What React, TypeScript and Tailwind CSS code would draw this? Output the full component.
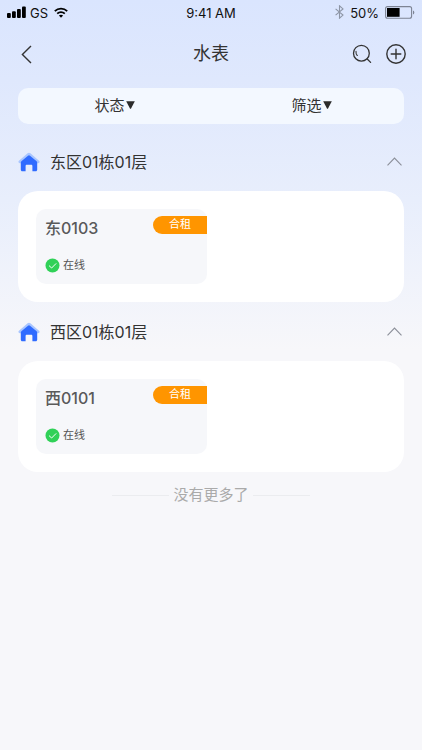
import { useState } from 'react'

type Meter = { name: string; tag: string; status: string }
type Floor = { title: string; meters: Meter[] }

const floors: Floor[] = [
  { title: '东区01栋01层', meters: [{ name: '东0103', tag: '合租', status: '在线' }] },
  { title: '西区01栋01层', meters: [{ name: '西0101', tag: '合租', status: '在线' }] },
]

function StatusBar() {
  return (
    <div className="grid h-6 grid-cols-3 items-center px-[7px] pt-0.5 text-[13px] leading-5 text-[#111]">
      <div className="flex items-center">
        <svg className="mb-0.5" width="19" height="12" viewBox="0 0 19 12" fill="#000">
          <rect x="0" y="7" width="3.8" height="5" rx="1" />
          <rect x="5" y="5.2" width="3.8" height="6.8" rx="1" />
          <rect x="10" y="3" width="3.8" height="9" rx="1" />
          <rect x="15" y="0.6" width="3.8" height="11.4" rx="1" />
        </svg>
        <span className="ml-1">GS</span>
        <svg className="mb-0.5 ml-1.5" width="14" height="11" viewBox="0 0 14 11" fill="none" stroke="#000" strokeWidth="1.8">
          <path d="M0.8 4.2a9 9 0 0 1 12.4 0" />
          <path d="M3.2 6.7a5.6 5.6 0 0 1 7.6 0" />
          <path d="M7 10.8 4.9 8.6a3.2 3.2 0 0 1 4.2 0z" fill="#000" stroke="none" />
        </svg>
      </div>
      <div className="text-center">9:41 AM</div>
      <div className="flex items-center justify-end">
        <svg className="mb-0.5" width="9" height="14" viewBox="0 0 9 14" fill="none" stroke="#8d95a5" strokeWidth="1.1">
          <path d="M0.6 3.8 8 10.1 4.5 13.2V0.8L8 3.9 0.6 10.2" />
        </svg>
        <span className="ml-1.5">50%</span>
        <svg className="mb-0.5 ml-1.5" width="30" height="13" viewBox="0 0 30 13">
          <rect x="0.6" y="0.6" width="26" height="11.6" rx="2" fill="none" stroke="#7d8494" strokeWidth="1.1" />
          <rect x="2" y="2" width="12.6" height="8.8" fill="#000" />
          <path d="M28 4.4c1.8.6 1.8 3.4 0 4z" fill="#7d8494" />
        </svg>
      </div>
    </div>
  )
}

function HouseIcon() {
  return (
    <svg width="22" height="20" viewBox="0 0 22 20">
      <path d="M9.6 1.3a2.1 2.1 0 0 1 2.8 0l8.6 7.4c1.1 1 .5 2.5-.9 2.5H1.9c-1.4 0-2-1.5-.9-2.5z" fill="#a9c6ff" />
      <path d="M10 3.7a1.6 1.6 0 0 1 2 0l6.3 5.3c.6.5.9 1.1.9 1.8v6.9c0 .9-.6 1.5-1.5 1.5h-3.3v-5.1c0-.8-.5-1.3-1.3-1.3H8.9c-.8 0-1.3.5-1.3 1.3v5.1H4.3c-.9 0-1.5-.6-1.5-1.5v-6.9c0-.7.3-1.3.9-1.8z" fill="#2f6bff" />
    </svg>
  )
}

function MeterTile({ meter }: { meter: Meter }) {
  return (
    <div className="flex h-[75px] flex-col justify-between rounded-[10px] bg-[#f6f7fa] pt-[7px] pb-[10px] pl-[9px]">
      <div className="flex items-start justify-between">
        <span className="text-base leading-6 font-medium text-[#5a5a5a]">{meter.name}</span>
        <span className="h-[18px] w-[54px] rounded-l-full bg-[#ff9500] text-center text-[11px] leading-[17px] text-white">
          {meter.tag}
        </span>
      </div>
      <div className="flex items-center gap-[3px] text-[11px] leading-[18px] text-[#555]">
        <svg width="15" height="15" viewBox="0 0 15 15" fill="none">
          <circle cx="7.5" cy="7.5" r="7" fill="#30d158" />
          <path d="M4 7.6 6.6 10l4.6-4.6" stroke="#fff" strokeWidth="1" />
        </svg>
        {meter.status}
      </div>
    </div>
  )
}

function FloorSection({ floor }: { floor: Floor }) {
  const [open, setOpen] = useState(true)

  return (
    <section>
      <button className="flex h-[59px] w-full items-center" onClick={() => setOpen(!open)} aria-expanded={open}>
        <HouseIcon />
        <span className="ml-[10px] text-base text-[#333]">{floor.title}</span>
        <svg className={open ? 'mr-0.5 ml-auto' : 'mr-0.5 ml-auto rotate-180'} width="15" height="9" viewBox="0 0 15 9" fill="none" stroke="#8b8f99" strokeWidth="1.1">
          <path d="M0.5 8.4 7.5 1l7 7.4" />
        </svg>
      </button>
      {open && (
        <div className="grid grid-cols-2 gap-2 rounded-[20px] bg-white p-[18px]">
          {floor.meters.map((m) => (
            <MeterTile key={m.name} meter={m} />
          ))}
        </div>
      )}
    </section>
  )
}

function FilterButton({ label }: { label: string }) {
  return (
    <button className="flex items-center justify-center text-[15px] text-[#333]">
      {label}
      <svg className="mb-0.5 ml-0.5" width="9" height="8" viewBox="0 0 9 8" fill="#2b2b2b">
        <path d="M.2.3h8.6L4.9 7.7h-.8z" />
      </svg>
    </button>
  )
}

export default function App() {
  return (
    <div className="min-h-screen bg-[#f7f7fa] bg-[linear-gradient(to_bottom,#dae5fe_0px,#dfe8fd_80px,#e8eefc_200px,#f7f7fa_350px)] font-[Inter,'Noto_Sans_CJK_SC',sans-serif]">
      <StatusBar />

      <header className="grid h-16 grid-cols-3 items-center px-4 pb-1">
        <button className="flex h-8 w-5 items-center justify-center" aria-label="返回">
          <svg width="11" height="19" viewBox="0 0 11 19" fill="none" stroke="#333" strokeWidth="1.4">
            <path d="M10 1 1.4 9.5 10 18" />
          </svg>
        </button>
        <h1 className="text-center text-lg text-[#333]">水表</h1>
        <div className="flex items-center justify-end gap-[13px]">
          <button aria-label="搜索">
            <svg width="22" height="22" viewBox="0 0 22 22" fill="none" stroke="#333" strokeWidth="1.3" strokeLinecap="round">
              <circle cx="10.4" cy="10.2" r="7.9" />
              <path d="m16.2 16 3.4 3.4" />
              <path d="M5 8.4c-.2 1.7.2 3 1.3 4.1" strokeWidth="1.1" />
            </svg>
          </button>
          <button aria-label="添加">
            <svg width="20" height="20" viewBox="0 0 20 20" fill="none" stroke="#333" strokeWidth="1.4" strokeLinecap="round">
              <circle cx="10" cy="10" r="9.2" />
              <path d="M10 5.2v9.6M5.2 10h9.6" />
            </svg>
          </button>
        </div>
      </header>

      <main className="px-[18px]">
        <div className="mb-2 grid h-9 grid-cols-[20fr_19fr] gap-2 rounded-[10px] bg-[#f3f8ff]">
          <FilterButton label="状态" />
          <FilterButton label="筛选" />
        </div>

        {floors.map((f) => (
          <FloorSection key={f.title} floor={f} />
        ))}

        <div className="flex items-center justify-center gap-1 pt-[11px] text-[15px] leading-6 text-[#aaa]">
          <span className="h-px w-[57px] bg-[#ebecef]" />
          没有更多了
          <span className="h-px w-[57px] bg-[#ebecef]" />
        </div>
      </main>
    </div>
  )
}
